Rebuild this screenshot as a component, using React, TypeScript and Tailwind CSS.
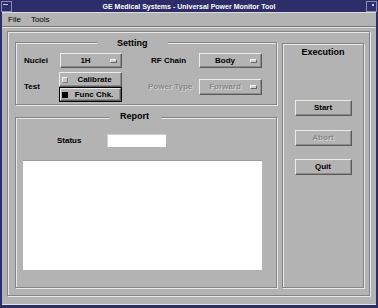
const raised =
  "border border-t-[#ececec] border-l-[#ececec] border-b-[#5a5a5a] border-r-[#5a5a5a] shadow-[inset_-1px_-1px_0_#8c8c8c]";
const etched =
  "border border-[#858585] shadow-[inset_1px_1px_0_#e8e8e8,1px_1px_0_#e8e8e8]";

function Indicator() {
  return (
    <span className="w-[7px] h-[4px] mr-[4px] bg-[#cfcfcf] border border-t-[#f4f4f4] border-l-[#f4f4f4] border-b-[#666] border-r-[#666]" />
  );
}

function OptionMenu({
  label,
  disabled,
  className,
}: {
  label: string;
  disabled?: boolean;
  className: string;
}) {
  return (
    <div className={`${raised} flex items-center ${className}`}>
      <span
        className={`flex-1 text-center text-[8px] font-bold leading-none ${
          disabled ? "text-[#8a8a8a] [text-shadow:1px_1px_0_#d6d6d6]" : "text-black"
        }`}
      >
        {label}
      </span>
      <Indicator />
    </div>
  );
}

function PushButton({ label, disabled }: { label: string; disabled?: boolean }) {
  return (
    <div className={`${raised} w-[57px] h-[16px] flex items-center justify-center`}>
      <span
        className={`text-[8px] font-bold leading-none ${
          disabled ? "text-[#8a8a8a] [text-shadow:1px_1px_0_#d6d6d6]" : "text-black"
        }`}
      >
        {label}
      </span>
    </div>
  );
}

export default function App() {
  return (
    <div className="w-[378px] h-[308px] bg-[#2d2d69] flex flex-col font-['Liberation_Sans',Arial,sans-serif] select-none">
      {/* title bar */}
      <div className="h-[12px] flex items-center justify-between px-[1px]">
        <div className="w-[11px] h-[11px] border border-[#8a8ab4] flex items-start justify-center">
          <span className="w-[5px] h-[1px] bg-[#c8c8e0] mt-[2px] mr-[3px]" />
        </div>
        <span className="text-white text-[7px] font-bold leading-none">
          GE Medical Systems - Universal Power Monitor Tool
        </span>
        <div className="w-[11px] h-[11px] border border-[#8a8ab4] flex items-start justify-end">
          <span className="w-[2px] h-[2px] bg-[#c8c8e0] mt-[2px] mr-[2px]" />
        </div>
      </div>

      {/* window body */}
      <div className="mx-[2px] mb-[3px] flex-1 bg-[#b3b3b3] flex flex-col border-b border-[#e4e4e4]">
        {/* menu bar */}
        <div className="h-[15px] flex items-center gap-[10px] pl-[6px] border-t border-t-[#dcdcdc] border-b border-b-[#7a7a7a] shadow-[0_1px_0_#e2e2e2]">
          <span className="text-[8px] leading-none text-black">File</span>
          <span className="text-[8px] leading-none text-black">Tools</span>
        </div>

        {/* main */}
        <div className="mt-[4px] ml-[5px] mr-[6px]">
          <div className={`${etched} h-[265px] pl-[7px] pt-[10px] pr-[5px] flex gap-[5px]`}>
            {/* left column */}
            <div className="w-[262px] flex flex-col">
              {/* Setting frame */}
              <div className={`${etched} h-[63px] flex flex-col`}>
                <div className="-mt-[5px] h-[11px] flex">
                  <span className="ml-[81px] px-[20px] bg-[#b3b3b3] text-[9px] font-bold leading-[11px] text-black">
                    Setting
                  </span>
                </div>
                <div className="mt-[4px] h-[15px] flex items-center pl-[8px]">
                  <span className="w-[36px] text-[8px] font-bold leading-none">Nuclei</span>
                  <OptionMenu label="1H" className="w-[62px] h-[15px]" />
                  <span className="ml-[29px] w-[48px] text-[8px] font-bold leading-none">
                    RF Chain
                  </span>
                  <OptionMenu label="Body" className="w-[63px] h-[15px]" />
                </div>
                <div className="mt-[4px] h-[30px] flex items-center pl-[8px]">
                  <span className="w-[35px] text-[8px] font-bold leading-none">Test</span>
                  <div className="w-[63px] flex flex-col">
                    <div className={`${raised} h-[15px] flex items-center`}>
                      <span className="ml-[2px] w-[6px] h-[6px] border border-t-[#f0f0f0] border-l-[#f0f0f0] border-b-[#7a7a7a] border-r-[#7a7a7a] bg-[#c4c4c4]" />
                      <span className="flex-1 text-center text-[8px] font-bold leading-none">
                        Calibrate
                      </span>
                    </div>
                    <div className="h-[15px] border border-black flex">
                      <div className={`${raised} flex-1 flex items-center`}>
                        <span className="ml-[1px] w-[6px] h-[6px] bg-black" />
                        <span className="flex-1 text-center text-[8px] font-bold leading-none">
                          Func Chk.
                        </span>
                      </div>
                    </div>
                  </div>
                  <span className="ml-[26px] w-[51px] text-[8px] font-bold leading-none text-[#8a8a8a] [text-shadow:1px_1px_0_#d0d0d0]">
                    Power Type
                  </span>
                  <OptionMenu label="Forward" disabled className="w-[63px] h-[16px]" />
                </div>
              </div>

              {/* Report frame */}
              <div className={`${etched} mt-[12px] h-[171px] flex flex-col`}>
                <div className="-mt-[7px] h-[11px] flex">
                  <span className="ml-[93px] pl-[11px] pr-[12px] bg-[#b3b3b3] text-[9px] font-bold leading-[11px] text-black">
                    Report
                  </span>
                </div>
                <div className="mt-[12px] h-[13px] flex items-center pl-[41px]">
                  <span className="w-[50px] text-[8px] font-bold leading-none">Status</span>
                  <div className="w-[59px] h-[13px] bg-white border-t border-l border-[#d0d0d0]" />
                </div>
                <div className="mt-[13px] ml-[7px] w-[239px] h-[110px] bg-white border-t border-[#9a9a9a]" />
              </div>
            </div>

            {/* Execution frame */}
            <div className={`${etched} w-[82px] h-[245px] mt-[1px] flex flex-col items-center`}>
              <span className="mt-[3px] text-[9px] font-bold leading-[10px] text-black">
                Execution
              </span>
              <div className="mt-[43px]">
                <PushButton label="Start" />
              </div>
              <div className="mt-[14px]">
                <PushButton label="Abort" disabled />
              </div>
              <div className="mt-[13px]">
                <PushButton label="Quit" />
              </div>
            </div>
          </div>
        </div>
      </div>
    </div>
  );
}
